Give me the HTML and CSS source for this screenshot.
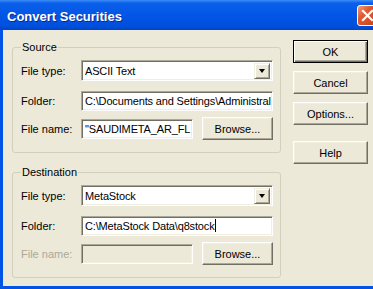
FILE: index.html
```html
<!DOCTYPE html>
<html lang="en">
<head>
  <meta charset="UTF-8">
  <meta name="viewport" content="width=device-width, initial-scale=1.0">
  <title>Convert Securities</title>
  <link rel="stylesheet" href="styles.css">
</head>
<body>

  <div class="window">
    <!-- Title bar -->
    <div class="titlebar">
      <span class="title">Convert Securities</span>
      <div class="close-btn">
        <svg width="13" height="13" viewBox="0 0 13 13">
          <path d="M2 2 L11 11 M11 2 L2 11" stroke="#fff" stroke-width="2.2" stroke-linecap="square"/>
        </svg>
      </div>
    </div>

    <div class="frame">
      <div class="groups">

        <!-- Source -->
        <fieldset class="group">
          <legend>Source</legend>
          <div class="row">
            <span class="label">File type:</span>
            <div class="combo">
              <span class="value">ASCII Text</span>
              <span class="drop"><span class="arrow"></span></span>
            </div>
          </div>
          <div class="row">
            <span class="label">Folder:</span>
            <div class="textbox">C:\Documents and Settings\Administral</div>
          </div>
          <div class="row row-file">
            <span class="label">File name:</span>
            <div class="file-wrap">
              <div class="textbox short">"SAUDIMETA_AR_FL</div>
              <button class="btn">Browse...</button>
            </div>
          </div>
        </fieldset>

        <!-- Destination -->
        <fieldset class="group">
          <legend>Destination</legend>
          <div class="row">
            <span class="label">File type:</span>
            <div class="combo">
              <span class="value">MetaStock</span>
              <span class="drop"><span class="arrow"></span></span>
            </div>
          </div>
          <div class="row">
            <span class="label">Folder:</span>
            <div class="textbox">C:\MetaStock Data\q8stock<span class="caret"></span></div>
          </div>
          <div class="row row-file">
            <span class="label disabled">File name:</span>
            <div class="file-wrap">
              <div class="textbox short off"></div>
              <button class="btn">Browse...</button>
            </div>
          </div>
        </fieldset>

      </div>

      <div class="buttons">
        <button class="btn default">OK</button>
        <button class="btn">Cancel</button>
        <button class="btn">Options...</button>
        <button class="btn help">Help</button>
      </div>
    </div>
  </div>

</body>
</html>
```

FILE: styles.css
```css
body {
  margin: 0;
  padding: 0;
  width: 373px;
  height: 289px;
  overflow: hidden;
  font-family: "Liberation Sans", Arial, sans-serif;
  font-size: 11px;
  color: #000;
  background: #ece9d8;
}

.window {
  width: 378px;
  height: 289px;
  display: flex;
  flex-direction: column;
}

/* Title bar */
.titlebar {
  height: 30px;
  flex: none;
  display: flex;
  align-items: flex-start;
  justify-content: space-between;
  background: linear-gradient(to bottom, #3d8ef8 0, #0a60ea 3px, #0457e6 45%, #0050de 85%, #0044c9 100%);
}

.title {
  margin: 9px 0 0 7px;
  font-family: "Liberation Sans", Arial, sans-serif;
  font-size: 13px;
  font-weight: bold;
  color: #fff;
  text-shadow: 1px 1px 0 #0a2a8a;
}

.close-btn {
  width: 19px;
  height: 19px;
  margin: 5px 0 0 0;
  border: 1px solid #fff;
  border-radius: 3px;
  background: linear-gradient(135deg, #f0a080 0, #e25a32 35%, #c9411c 100%);
  display: flex;
  align-items: center;
  justify-content: center;
}

/* Window body */
.frame {
  flex: 1;
  display: flex;
  border-left: 3px solid #0055e5;
  border-bottom: 3px solid #0055e5;
  background: #ece9d8;
}

.groups {
  width: 269px;
  margin-left: 9px;
  padding-top: 11px;
  display: flex;
  flex-direction: column;
  gap: 13px;
}

.group {
  margin: 0;
  padding: 6px 7px 12px 8px;
  border: 1px solid #d0d0bf;
  border-radius: 3px;
  display: flex;
  flex-direction: column;
}

.group legend {
  padding: 0 1px;
  margin-left: 0;
  line-height: 13px;
}

.row {
  display: flex;
  align-items: center;
  height: 21px;
  margin-bottom: 9px;
}

.row-file {
  height: 23px;
  margin-bottom: 0;
  margin-top: -3px;
}

.label {
  width: 60px;
  flex: none;
}

.label.disabled {
  color: #aca899;
}

/* Sunken fields */
.combo,
.textbox {
  box-sizing: border-box;
  width: 192px;
  background: #fff;
  border-top: 1px solid #aca899;
  border-left: 1px solid #aca899;
  border-right: 1px solid #fff;
  border-bottom: 1px solid #fff;
  box-shadow: inset 1px 1px 0 #716f64, inset -1px -1px 0 #f1efe2;
  white-space: nowrap;
  overflow: hidden;
  letter-spacing: -0.15px;
}

.combo {
  height: 21px;
  display: flex;
  align-items: center;
  justify-content: space-between;
  padding: 0 2px 0 3px;
}

.textbox {
  height: 20px;
  line-height: 18px;
  padding-left: 3px;
}

.textbox.short {
  width: 112px;
}

.textbox.off {
  background: #ece9d8;
}

.caret {
  display: inline-block;
  width: 1px;
  height: 13px;
  background: #000;
  vertical-align: -2px;
}

.drop {
  width: 16px;
  height: 16px;
  box-sizing: border-box;
  background: #ece9d8;
  border-top: 1px solid #f1efe2;
  border-left: 1px solid #f1efe2;
  border-right: 1px solid #716f64;
  border-bottom: 1px solid #716f64;
  box-shadow: inset 1px 1px 0 #fff, inset -1px -1px 0 #aca899;
  display: flex;
  align-items: center;
  justify-content: center;
}

.arrow {
  width: 0;
  height: 0;
  border-left: 3.5px solid transparent;
  border-right: 3.5px solid transparent;
  border-top: 4px solid #000;
  margin-top: 1px;
}

.file-wrap {
  width: 192px;
  display: flex;
  align-items: center;
  justify-content: space-between;
}

/* Push buttons */
.btn {
  box-sizing: border-box;
  width: 71px;
  height: 23px;
  padding: 0;
  font-family: "Liberation Sans", Arial, sans-serif;
  font-size: 11px;
  color: #000;
  background: #ece9d8;
  border-top: 1px solid #fff;
  border-left: 1px solid #fff;
  border-right: 1px solid #716f64;
  border-bottom: 1px solid #716f64;
  box-shadow: inset -1px -1px 0 #aca899, inset 1px 1px 0 #f1efe2;
  border-radius: 0;
}

.buttons {
  margin-left: 12px;
  padding-top: 10px;
  display: flex;
  flex-direction: column;
}

.buttons .btn {
  width: 75px;
  margin-bottom: 8px;
}

.buttons .btn.default {
  border: 1px solid #000;
  box-shadow: inset 1px 1px 0 #fff, inset -1px -1px 0 #716f64, inset -2px -2px 0 #aca899;
}

.buttons .btn.help {
  margin-top: 8px;
}
```
